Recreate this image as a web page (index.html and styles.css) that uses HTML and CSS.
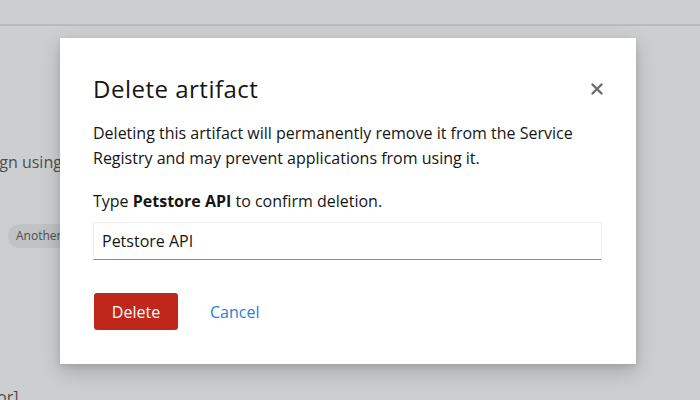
FILE: index.html
```html
<!DOCTYPE html>
<html lang="en">
<head>
<meta charset="utf-8">
<title>Delete artifact</title>
<link rel="stylesheet" href="styles.css">
</head>
<body>
<div class="page">
  <nav class="topnav">
    <span class="nav-item nav-first">ent</span>
    <span class="nav-item">Documentation</span>
  </nav>
  <div class="content">
    <p class="bg-text bg-design">Design using</p>
    <span class="chip">Another</span>
    <p class="bg-text bg-bottom">or]</p>
  </div>
</div>
<div class="modal" role="dialog" aria-labelledby="mtitle">
  <header class="modal-header">
    <h1 id="mtitle" class="modal-title">Delete artifact</h1>
    <button class="close" aria-label="Close">
      <svg width="12" height="12" viewBox="0 0 12 12"><path d="M1.5 1.5 L10.5 10.5 M10.5 1.5 L1.5 10.5" stroke="#6a6e73" stroke-width="2.4" stroke-linecap="round"/></svg>
    </button>
  </header>
  <div class="modal-body">
    <p class="desc">Deleting this artifact will permanently remove it from the Service Registry and may prevent applications from using it.</p>
    <p class="confirm">Type <b>Petstore API</b> to confirm deletion.</p>
    <div class="input">Petstore API</div>
  </div>
  <footer class="modal-footer">
    <button class="btn btn-danger">Delete</button>
    <button class="btn btn-link">Cancel</button>
  </footer>
</div>
</body>
</html>
```

FILE: styles.css
```css
* { box-sizing: border-box; }
html, body { margin: 0; padding: 0; }
body {
  width: 700px;
  height: 400px;
  overflow: hidden;
  background: #cdcecf;
  font-family: "Open Sans", "Noto Sans", sans-serif;
  color: #151515;
  position: relative;
}
.page { height: 400px; }
.topnav {
  height: 26px;
  border-bottom: 2px solid #b9babc;
  display: flex;
  gap: 32px;
  align-items: flex-end;
  overflow: hidden;
}
.nav-item {
  font-size: 16px;
  color: #727375;
  line-height: 20px;
  margin-bottom: 21px;
}
.nav-first { margin-left: -12px; }
.content { padding-top: 124px; }
.bg-text {
  margin: 0;
  font-size: 16px;
  color: #4d4e50;
  line-height: 24px;
}
.bg-design { margin-left: -33px; }
.chip {
  display: inline-block;
  margin: 50px 0 0 8px;
  padding: 3px 8px;
  border-radius: 14px;
  background: #c1c2c4;
  font-size: 12px;
  color: #4d4e50;
  line-height: 18px;
}
.bg-bottom { margin-top: 137px; margin-left: -3px; }
.modal {
  position: absolute;
  left: 60px;
  top: 38px;
  width: 576px;
  height: 326px;
  background: #fff;
  box-shadow: 0 8px 20px rgba(3,3,3,0.18), 0 2px 6px rgba(3,3,3,0.1);
  padding: 0 34px 0 33px;
}
.modal-header {
  display: flex;
  justify-content: space-between;
  align-items: center;
  padding-top: 36px;
}
.modal-title {
  margin: 0;
  font-size: 24px;
  font-weight: 400;
  letter-spacing: 0.5px;
  line-height: 30px;
}
.close {
  border: 0;
  background: none;
  padding: 0;
  width: 12px;
  height: 12px;
  margin-right: -1px;
  display: flex;
}
.modal-body { padding-top: 17px; font-size: 16px; }
.desc { margin: 0; line-height: 25px; }
.confirm { margin: 18px 0 0; line-height: 25px; }
.confirm b { font-weight: 700; }
.input {
  margin-top: 8px;
  height: 38px;
  border: 1px solid #f0f0f0;
  border-bottom-color: #8a8d90;
  padding: 0 8px;
  display: flex;
  align-items: center;
  font-size: 16px;
}
.modal-footer {
  display: flex;
  align-items: center;
  gap: 16px;
  padding-top: 33px;
}
.btn {
  font-family: inherit;
  font-size: 16px;
  height: 37px;
  border: 0;
  padding: 0 16px;
  border-radius: 3px;
  background: none;
}
.btn-danger {
  background: #c0271b;
  color: #fff;
  width: 84px;
  margin-left: 1px;
}
.btn-link { color: #2b7fd4; }
```
